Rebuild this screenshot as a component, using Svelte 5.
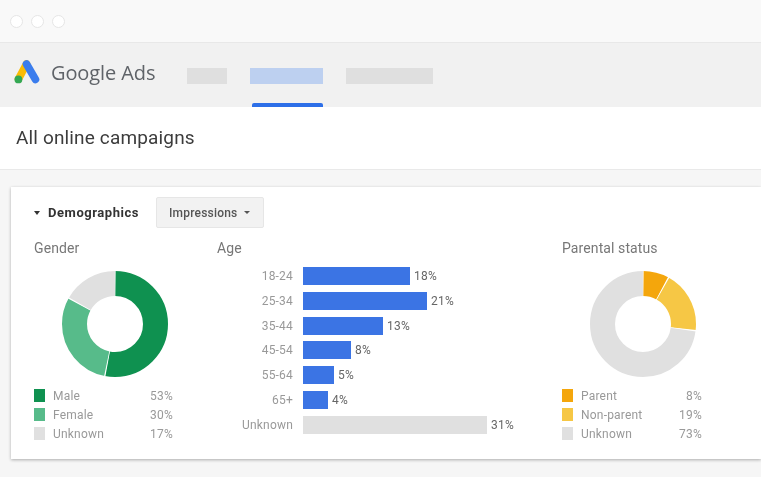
<script>
	const gender = [
		{ label: 'Male', pct: 53, color: '#0f9150' },
		{ label: 'Female', pct: 30, color: '#57bb8a' },
		{ label: 'Unknown', pct: 17, color: '#e0e0e0' }
	];
	const parental = [
		{ label: 'Parent', pct: 8, color: '#f4a60c' },
		{ label: 'Non-parent', pct: 19, color: '#f6c745' },
		{ label: 'Unknown', pct: 73, color: '#e0e0e0' }
	];
	const age = [
		{ label: '18-24', pct: 18, width: 107 },
		{ label: '25-34', pct: 21, width: 124 },
		{ label: '35-44', pct: 13, width: 80 },
		{ label: '45-54', pct: 8, width: 48 },
		{ label: '55-64', pct: 5, width: 31 },
		{ label: '65+', pct: 4, width: 25 },
		{ label: 'Unknown', pct: 31, width: 184, muted: true }
	];

	const R = 40.5;
	const C = 2 * Math.PI * R;

	function segments(items) {
		let start = 0;
		return items.map((item) => {
			const seg = { ...item, dash: (item.pct / 100) * C, offset: -(start / 100) * C };
			start += item.pct;
			return seg;
		});
	}
</script>

{#snippet donut(items)}
	<svg class="donut" viewBox="0 0 108 108" width="108" height="108">
		<g transform="rotate(-90 54 54)">
			{#each segments(items) as s}
				<circle cx="54" cy="54" r={R} fill="none" stroke={s.color} stroke-width="25"
					stroke-dasharray="{s.dash} {C - s.dash}" stroke-dashoffset={s.offset} />
			{/each}
			{#each segments(items) as s}
				<circle cx="54" cy="54" r={R} fill="none" stroke="#fff" stroke-width="26"
					stroke-dasharray="1 {C - 1}" stroke-dashoffset={s.offset + 0.5} />
			{/each}
		</g>
	</svg>
{/snippet}

{#snippet legend(items)}
	<ul class="legend">
		{#each items as item}
			<li>
				<i style="background: {item.color}"></i>
				<span>{item.label}</span>
				<b>{item.pct}%</b>
			</li>
		{/each}
	</ul>
{/snippet}

<main class="page">
	<div class="chrome">
		<span></span><span></span><span></span>
	</div>

	<header class="topbar">
		<svg class="logo" viewBox="0 0 26 24" width="26" height="24">
			<path d="M12.5 4 4.5 19" stroke="#fbbc04" stroke-width="7.6" stroke-linecap="round" fill="none" />
			<path d="M12.5 4 21.5 19.5" stroke="#3b7ded" stroke-width="7.6" stroke-linecap="round" fill="none" />
			<circle cx="4.4" cy="19.4" r="3.9" fill="#34a853" />
		</svg>
		<div class="brand">Google Ads</div>
		<nav>
			<div class="tab"><div class="ph" style="width: 40px"></div></div>
			<div class="tab on"><div class="ph" style="width: 73px"></div><div class="ink"></div></div>
			<div class="tab"><div class="ph" style="width: 87px"></div></div>
		</nav>
	</header>

	<div class="title">All online campaigns</div>

	<section class="card">
		<div class="card-head">
			<span class="tri"></span>
			<h2>Demographics</h2>
			<button>Impressions<span class="caret"></span></button>
		</div>

		<div class="cols">
			<div class="col">
				<h3>Gender</h3>
				<div class="chart">{@render donut(gender)}</div>
				{@render legend(gender)}
			</div>

			<div class="col">
				<h3>Age</h3>
				<div class="bars">
					{#each age as row}
						<div class="bar-row">
							<span class="bar-label">{row.label}</span>
							<div class="bar" class:muted={row.muted} style="width: {row.width}px"></div>
							<span class="bar-pct">{row.pct}%</span>
						</div>
					{/each}
				</div>
			</div>

			<div class="col">
				<h3>Parental status</h3>
				<div class="chart">{@render donut(parental)}</div>
				{@render legend(parental)}
			</div>
		</div>
	</section>
</main>

<style>
	:global(body) { margin: 0; background: #f6f6f6; font-family: Roboto, "Liberation Sans", sans-serif; }
	.page { width: 761px; height: 477px; overflow: hidden; background: #f6f6f6; filter: blur(0.4px); }

	.chrome { display: flex; align-items: center; gap: 8px; height: 42px; padding-left: 10px; background: #f9f9f9; border-bottom: 1px solid #e8e8e8; }
	.chrome span { box-sizing: border-box; width: 13px; height: 13px; border-radius: 50%; background: #fff; border: 1px solid #e6e6e6; }

	.topbar { display: flex; align-items: center; height: 64px; padding-left: 14px; background: #f1f1f1; }
	.logo { margin-top: -6px; }
	.brand { margin: -6px 0 0 11px; width: 136px; color: #5f6368; font-size: 20px; font-family: "Open Sans", Roboto, sans-serif; letter-spacing: -.1px; white-space: nowrap; }
	nav { display: flex; gap: 23px; align-self: stretch; }
	.tab { display: flex; flex-direction: column; padding-top: 25px; }
	.ph { height: 16px; background: #dfdfdf; }
	.on .ph { background: #bdd0f0; }
	.ink { height: 4px; margin: auto 0 0 2px; background: #2d6fe8; border-radius: 2px 2px 0 0; }

	.title { height: 62px; line-height: 62px; padding-left: 16px; background: #fff; border-bottom: 1px solid #e9e9e9; color: #3c3c3c; font-size: 19px; letter-spacing: .15px; }

	.card { box-sizing: border-box; height: 272px; margin: 17px 0 0 11px; padding: 10px 0 0 23px; background: #fff; box-shadow: 0 1px 3px rgba(0,0,0,.3); }
	.card-head { display: flex; align-items: center; height: 31px; }
	.tri { width: 0; height: 0; border: 3.5px solid transparent; border-top: 4px solid #333; border-bottom: 0; margin-right: 7px; }
	h2 { width: 91px; margin: 0 17px 0 1px; color: #333; font-size: 13px; font-weight: 700; letter-spacing: .55px; white-space: nowrap; }
	button { box-sizing: border-box; width: 108px; height: 31px; padding: 0 0 0 12px; display: flex; align-items: center; background: #f2f2f2; border: 1px solid #e6e6e6; border-radius: 2px; color: #555; font: 500 12px Roboto, sans-serif; letter-spacing: .2px; }
	.caret { width: 0; height: 0; margin-left: 7px; border: 3px solid transparent; border-top: 3px solid #555; border-bottom: 0; }

	.cols { display: grid; grid-template-columns: 183px 345px 1fr; margin-top: 11px; }
	h3 { margin: 0; color: #777; font-size: 14px; font-weight: 400; line-height: 18px; letter-spacing: .1px; }
	.chart { width: 162px; margin-top: 13px; display: flex; justify-content: center; }
	.donut { display: block; }

	.legend { list-style: none; margin: 8px 0 0; padding: 0; width: 139px; }
	.col:last-child .legend { width: 140px; }
	.legend li { display: flex; align-items: center; height: 19px; color: #999; font-size: 12px; letter-spacing: .2px; }
	.legend i { width: 11px; height: 13px; margin-right: 8px; }
	.legend b { margin-left: auto; font-weight: 400; }

	.bars { display: flex; flex-direction: column; gap: 6.8px; margin-top: 10px; }
	.bar-row { display: flex; align-items: center; height: 18px; }
	.bar-label { width: 76px; margin-right: 10px; text-align: right; color: #999; font-size: 12px; letter-spacing: .2px; }
	.bar { height: 18px; background: #3b74e4; }
	.bar.muted { background: #e0e0e0; }
	.bar-pct { margin-left: 4px; color: #666; font-size: 12px; letter-spacing: .2px; }
</style>
